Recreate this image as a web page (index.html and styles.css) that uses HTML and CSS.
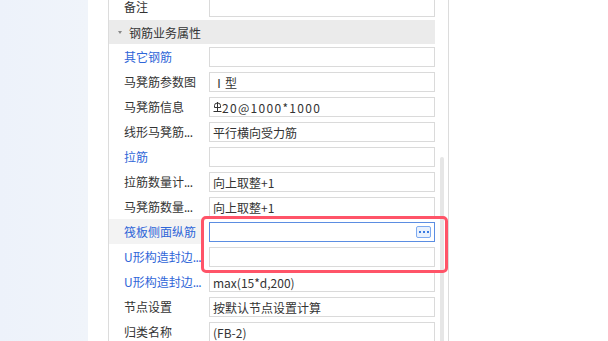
FILE: index.html
```html
<!DOCTYPE html>
<html lang="zh">
<head>
<meta charset="utf-8">
<title>属性</title>
<link rel="stylesheet" href="styles.css">
</head>
<body>
<div class="app">
  <div class="side"></div>
  <div class="gap"></div>
  <div class="panel">
    <div class="list">
      <div class="row"><div class="label">备注</div><div class="value"><div class="box"></div></div></div>
      <div class="group"><span class="caret"></span>钢筋业务属性</div>
      <div class="row"><div class="label link">其它钢筋</div><div class="value"><div class="box"></div></div></div>
      <div class="row"><div class="label">马凳筋参数图</div><div class="value"><div class="box">Ⅰ型</div></div></div>
      <div class="row"><div class="label">马凳筋信息</div><div class="value"><div class="box wide"><svg class="rebar" width="9" height="12" viewBox="0 0 9 12"><path d="M1.5 6.5 V4.5 A3 2.5 0 0 1 7.5 4.5 V6.5 Z M4.5 1 V10 M0.5 10.5 H8.5" fill="none" stroke="#333" stroke-width="1"/></svg>20@1000*1000</div></div></div>
      <div class="row"><div class="label">线形马凳筋<span class="dots">...</span></div><div class="value"><div class="box">平行横向受力筋</div></div></div>
      <div class="row"><div class="label link">拉筋</div><div class="value"><div class="box"></div></div></div>
      <div class="row"><div class="label">拉筋数量计<span class="dots">...</span></div><div class="value"><div class="box">向上取整+1</div></div></div>
      <div class="row"><div class="label">马凳筋数量<span class="dots">...</span></div><div class="value"><div class="box">向上取整+1</div></div></div>
      <div class="row active"><div class="label link">筏板侧面纵筋</div><div class="value"><div class="box focus"><span class="more"><i></i><i></i><i></i></span></div></div></div>
      <div class="row"><div class="label link">U形构造封边<span class="dots">...</span></div><div class="value"><div class="box"></div></div></div>
      <div class="row"><div class="label link">U形构造封边<span class="dots">...</span></div><div class="value"><div class="box">max(15*d,200)</div></div></div>
      <div class="row"><div class="label">节点设置</div><div class="value"><div class="box">按默认节点设置计算</div></div></div>
      <div class="row"><div class="label">归类名称</div><div class="value"><div class="box">(FB-2)</div></div></div>
    </div>
    <div class="scroll"><div class="thumb"></div></div>
  </div>
  <div class="highlight"></div>
</div>
</body>
</html>
```

FILE: styles.css
```css
html, body {
  margin: 0;
  padding: 0;
  background: #ffffff;
}
body {
  width: 608px;
  height: 341px;
  overflow: hidden;
  font-family: "Noto Sans CJK SC", "Noto Sans", sans-serif;
  font-size: 12px;
  color: #333333;
}
.app {
  position: relative;
  display: flex;
  height: 341px;
}
.side {
  width: 88px;
  flex: none;
  background: linear-gradient(90deg, #edf2fa, #f0f4fa);
}
.gap {
  width: 20px;
  flex: none;
  background: #ffffff;
}
.panel {
  display: flex;
  width: 339px;
  flex: none;
  border-left: 1px solid #dcdcdc;
  border-right: 1px solid #dcdcdc;
  overflow: hidden;
}
.list {
  width: 326px;
  flex: none;
  margin-top: -6px;
}
.row {
  display: flex;
  height: 25px;
}
.label {
  width: 92px;
  flex: none;
  box-sizing: border-box;
  padding-left: 15px;
  display: flex;
  align-items: center;
  white-space: nowrap;
}
.dots {
  letter-spacing: -0.5px;
}
.label.link {
  color: #2f66d8;
}
.row.active .label {
  background: #f3f3f3;
}
.value {
  flex: 1;
  padding: 3px 0 2px 8px;
}
.box {
  height: 20px;
  box-sizing: border-box;
  border: 1px solid #dadada;
  padding-left: 3px;
  display: flex;
  align-items: center;
  white-space: nowrap;
  background: #ffffff;
}
.box.wide {
  letter-spacing: 1.3px;
}
.box.focus {
  border-color: #5b8de2;
}
.rebar {
  margin-right: 0;
  margin-top: -1px;
}
.more {
  margin-left: auto;
  margin-right: 3px;
  width: 15px;
  height: 12px;
  box-sizing: border-box;
  border: 1px solid #7eaaf0;
  border-radius: 2px;
  background: #e9f1fd;
  display: flex;
  align-items: center;
  justify-content: center;
  gap: 2px;
}
.more i {
  width: 2px;
  height: 2px;
  background: #3a7be2;
}
.group {
  height: 24px;
  margin-top: 1px;
  background: #ebebeb;
  display: flex;
  align-items: center;
  padding-left: 9px;
}
.caret {
  width: 0;
  height: 0;
  border-left: 2.5px solid transparent;
  border-right: 2.5px solid transparent;
  border-top: 3px solid #888888;
  margin-right: 7px;
}
.scroll {
  width: 13px;
  flex: none;
  padding-top: 157px;
  padding-left: 5px;
  box-sizing: border-box;
}
.thumb {
  width: 4px;
  height: 220px;
  border-radius: 2px;
  background: #e6e6e6;
}
.highlight {
  position: absolute;
  left: 201px;
  top: 216px;
  width: 247px;
  height: 57px;
  box-sizing: border-box;
  border: 3px solid #ff5468;
  border-radius: 5px;
}
```
